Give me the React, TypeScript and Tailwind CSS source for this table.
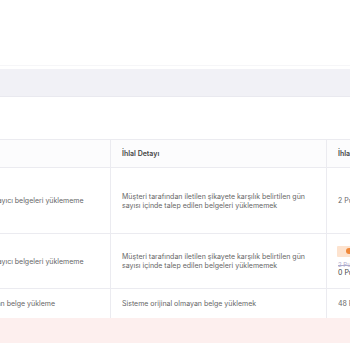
import React from "react";

const font = { fontFamily: "Inter, 'Noto Sans', sans-serif" };

export default function App() {
  return (
    <div className="w-[350px] h-[350px] bg-white overflow-hidden antialiased" style={font}>
      <div className="h-[66px] border-b border-[#f6f6f8]" />
      <div className="mt-[3px] h-[28px] bg-[#f1f1f6] border-b border-[#e9e9ef]" />
      <div className="h-[42px]" />
      <div className="ml-[-59px] w-[520px] text-[7px] leading-[9px] text-[#666666]">
        <div className="grid grid-cols-[170px_216px_134px] border-t border-b border-[#ebebf0] bg-[#fcfcfd] h-[29px]">
          <div className="border-r border-[#ebebf0]" />
          <div className="border-r border-[#ebebf0] flex items-center pl-[11px] font-semibold text-[#474747]">
            İhlal Detayı
          </div>
          <div className="flex items-center pl-[11px] font-semibold text-[#474747]">İhlal Puanı</div>
        </div>
        <div className="grid grid-cols-[170px_216px_134px] border-b border-[#ebebf0] h-[66px]">
          <div className="border-r border-[#ebebf0] flex items-center pl-[11px] whitespace-nowrap">
            Tedarikçi sağlayıcı belgeleri yüklememe
          </div>
          <div className="border-r border-[#ebebf0] flex items-center pl-[11px]">
            <div>
              Müşteri tarafından iletilen şikayete karşılık belirtilen gün
              <br />
              sayısı içinde talep edilen belgeleri yüklememek
            </div>
          </div>
          <div className="flex items-center pl-[11px]">2 Puan</div>
        </div>
        <div className="grid grid-cols-[170px_216px_134px] border-b border-[#ebebf0] h-[55px]">
          <div className="border-r border-[#ebebf0] flex items-center pl-[11px] whitespace-nowrap">
            Tedarikçi sağlayıcı belgeleri yüklememe
          </div>
          <div className="border-r border-[#ebebf0] flex items-center pl-[11px]">
            <div>
              Müşteri tarafından iletilen şikayete karşılık belirtilen gün
              <br />
              sayısı içinde talep edilen belgeleri yüklememek
            </div>
          </div>
          <div className="flex flex-col justify-center pl-[10px]">
            <div className="h-[11px] w-[40px] bg-[#fde3cf] rounded-[1px] flex items-center pl-[9px]">
              <div className="w-[6px] h-[6px] rounded-full bg-[#f0883a]" />
            </div>
            <div className="mt-[4px] pl-[1px] text-[6px] leading-[7px] text-[#aeaccd] line-through">2 Puan</div>
            <div className="pl-[1px] leading-[9px] text-[#3f3f3f]">0 Puan</div>
          </div>
        </div>
        <div className="grid grid-cols-[170px_216px_134px] h-[29px]">
          <div className="border-r border-[#ebebf0] flex items-center pl-[11px] whitespace-nowrap">
            Orijinal olmayan belge yükleme
          </div>
          <div className="border-r border-[#ebebf0] flex items-center pl-[11px]">
            Sisteme orijinal olmayan belge yüklemek
          </div>
          <div className="flex items-center pl-[11px]">48 Puan</div>
        </div>
        <div className="h-[25px] bg-[#fdefee]" />
      </div>
    </div>
  );
}
